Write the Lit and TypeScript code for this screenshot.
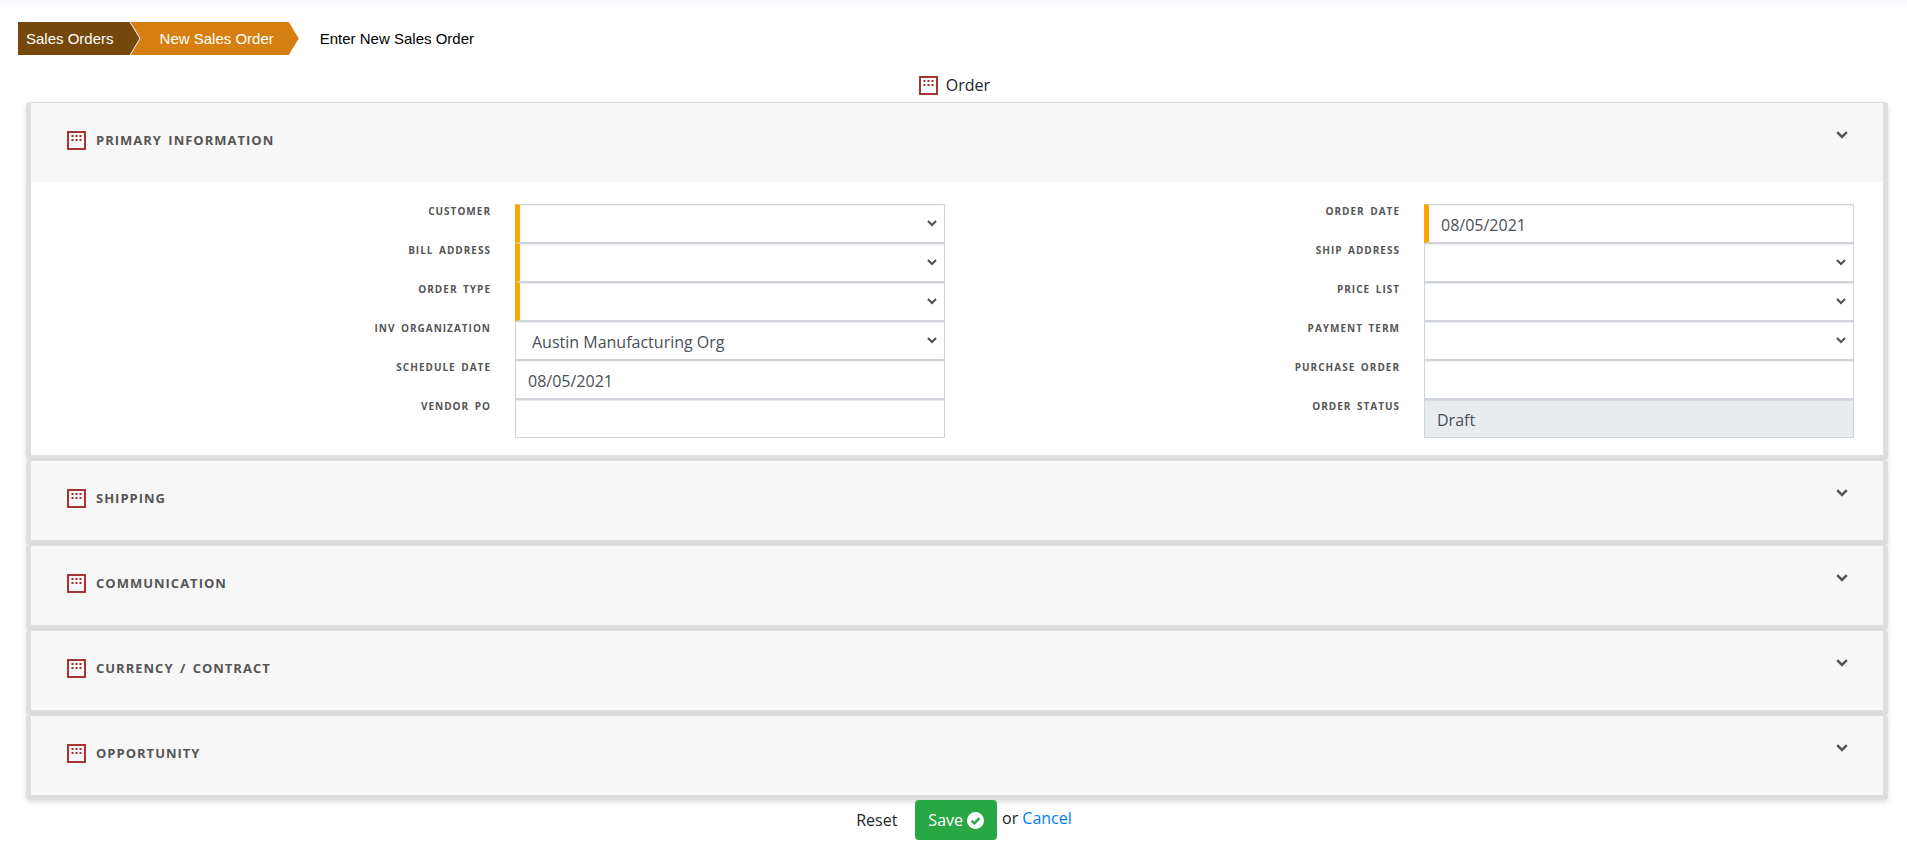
import { LitElement, html, css, svg, nothing, TemplateResult } from "lit";
import { customElement, state } from "lit/decorators.js";
import { classMap } from "lit/directives/class-map.js";

interface Field {
  id: string;
  label: string;
  kind: "select" | "text";
  value?: string;
  required?: boolean;
  readonly?: boolean;
}

const LEFT: Field[] = [
  { id: "customer", label: "Customer", kind: "select", required: true },
  { id: "bill-address", label: "Bill Address", kind: "select", required: true },
  { id: "order-type", label: "Order Type", kind: "select", required: true },
  { id: "inv-org", label: "Inv Organization", kind: "select", value: "Austin Manufacturing Org" },
  { id: "schedule-date", label: "Schedule Date", kind: "text", value: "08/05/2021" },
  { id: "vendor-po", label: "Vendor PO", kind: "text" },
];

const RIGHT: Field[] = [
  { id: "order-date", label: "Order Date", kind: "text", value: "08/05/2021", required: true },
  { id: "ship-address", label: "Ship Address", kind: "select" },
  { id: "price-list", label: "Price List", kind: "select" },
  { id: "payment-term", label: "Payment Term", kind: "select" },
  { id: "purchase-order", label: "Purchase Order", kind: "text" },
  { id: "order-status", label: "Order Status", kind: "text", value: "Draft", readonly: true },
];

const SECTIONS = ["Primary Information", "Shipping", "Communication", "Currency / Contract", "Opportunity"];

const dots = [4, 8, 12].flatMap((x) => [4, 8].map((y) => svg`<rect x=${x + 0.5} y=${y} width="2" height="2" fill="currentColor"></rect>`));

const gridIcon = html`<svg class="grid-icon" width="19" height="19" viewBox="0 0 19 19" aria-hidden="true">
  <rect x="1" y="1" width="17" height="17" fill="none" stroke="currentColor" stroke-width="1.9"></rect>
  ${dots}
</svg>`;

const chevron = html`<svg width="12" height="8" viewBox="0 0 12 8" aria-hidden="true">
  <path d="M1.2 1.2 6 6 10.8 1.2" fill="none" stroke="currentColor" stroke-width="2.5"></path>
</svg>`;

@customElement("app-root")
export class AppRoot extends LitElement {
  @state() private open = new Set<string>(["Primary Information"]);

  static styles = css`
    :host {
      display: block;
      color: #212529;
      background: #fff;
      font: 16px/24px "Open Sans", "Noto Sans", sans-serif;
    }
    * {
      box-sizing: border-box;
    }
    .strip {
      height: 5px;
      background: #f8f9fc;
    }
    .crumbs {
      display: flex;
      margin: 17px 18px 0;
      padding: 0;
      list-style: none;
      font: 15px/33px "Liberation Sans", Arial, sans-serif;
    }
    .crumb {
      display: block;
      color: #fff;
      text-decoration: none;
      clip-path: polygon(0 0, calc(100% - 10px) 0, 100% 50%, calc(100% - 10px) 100%, 0 100%);
    }
    .crumb.first {
      padding: 0 26px 0 8px;
      background: #75470b;
    }
    .crumb.second {
      margin-left: -10px;
      padding: 0 25px 0 30px;
      background: #d57f10;
      clip-path: polygon(1px 0, calc(100% - 10px) 0, 100% 50%, calc(100% - 10px) 100%, 1px 100%, 11px 50%);
    }
    .crumb.current {
      padding-left: 21px;
      color: #000;
      clip-path: none;
    }
    .page-title {
      display: flex;
      align-items: center;
      justify-content: center;
      gap: 8px;
      margin: 18px 0 5px;
      padding-left: 2px;
      font-size: 16px;
      font-weight: 400;
      line-height: 24px;
    }
    .grid-icon {
      flex: none;
      color: #a52a2a;
    }
    .cards {
      margin: 0 19px 0 26px;
    }
    .card {
      border: 5px solid #dedede;
      border-top: 1px solid #dedfe3;
      border-radius: 4px;
      box-shadow: 0 2px 5px rgba(0, 0, 0, 0.14);
    }
    .head {
      display: flex;
      align-items: center;
      gap: 10px;
      width: 100%;
      padding: 23px 35px 28px 36px;
      border: 0;
      background: #f7f7f7;
      color: #555;
      font: 700 13px/28px "Open Sans", "Noto Sans", sans-serif;
      letter-spacing: 1px;
      word-spacing: 2px;
      text-transform: uppercase;
      text-align: left;
      cursor: pointer;
    }
    .heading {
      margin: 0;
    }
    .name {
      flex: 1;
    }
    .mark {
      display: flex;
      padding-bottom: 10px;
    }
    .body {
      display: grid;
      grid-template-columns: 1fr 1fr;
      padding: 22px 29px 17px 5px;
    }
    .row {
      display: grid;
      grid-template-columns: 479fr 430fr;
    }
    .label {
      padding-right: 24px;
      color: #555;
      font-size: 10px;
      font-weight: 700;
      line-height: 15px;
      letter-spacing: 1px;
      word-spacing: 2px;
      text-transform: uppercase;
      text-align: right;
    }
    .control {
      display: block;
      position: relative;
      color: #495057;
    }
    .control svg {
      position: absolute;
      right: 8px;
      top: 16px;
      pointer-events: none;
    }
    .input {
      display: block;
      width: 100%;
      height: 39px;
      margin: 0;
      padding: 4px 12px 2px;
      border: 1px solid #ced4da;
      border-radius: 0;
      background: #fff;
      box-shadow: inset 0 1px 1px rgba(0, 0, 0, 0.075);
      color: #495057;
      font: 16px/24px "Open Sans", "Noto Sans", sans-serif;
      appearance: none;
      outline: none;
    }
    select.input {
      padding-left: 16px;
    }
    .input.required {
      border-left: 5px solid #ffa500;
    }
    .input.readonly {
      background: #e9ecef;
    }
    .actions {
      display: flex;
      justify-content: center;
      align-items: center;
      padding-left: 9px;
    }
    .reset,
    .save {
      border: 0;
      background: none;
      color: inherit;
      font: inherit;
      cursor: pointer;
    }
    .reset {
      padding: 8px 18px 8px 12px;
    }
    .save {
      display: flex;
      align-items: center;
      gap: 4px;
      padding: 8px 13px;
      border-radius: 4px;
      background: #28a745;
      color: #fff;
    }
    .cancel {
      color: #007bff;
      text-decoration: none;
    }
    .or {
      padding: 0 0 4px 5px;
    }
  `;

  private toggle(name: string) {
    const next = new Set(this.open);
    next.has(name) ? next.delete(name) : next.add(name);
    this.open = next;
  }

  private field(f: Field): TemplateResult {
    const cls = classMap({ input: true, required: !!f.required, readonly: !!f.readonly });
    return html`<div class="row">
      <label class="label" for=${f.id}>${f.label}</label>
      <div class="control">
        ${f.kind === "select"
          ? html`<select id=${f.id} class=${cls}>
                <option>${f.value ?? ""}</option>
              </select>
              <svg width="10" height="7" viewBox="0 0 10 7" aria-hidden="true">
                <path d="M1 1 5 5 9 1" fill="none" stroke="currentColor" stroke-width="2"></path>
              </svg>`
          : html`<input id=${f.id} class=${cls} type="text" .value=${f.value ?? ""} ?readonly=${!!f.readonly} />`}
      </div>
    </div>`;
  }

  private section(name: string, i: number): TemplateResult {
    const open = this.open.has(name);
    return html`<section class="card">
      <h2 class="heading">
        <button class="head" type="button" aria-expanded=${open} @click=${() => this.toggle(name)}>
          ${gridIcon}<span class="name">${name}</span><span class="mark">${chevron}</span>
        </button>
      </h2>
      ${i === 0 && open
        ? html`<div class="body">
            <div>${LEFT.map((f) => this.field(f))}</div>
            <div>${RIGHT.map((f) => this.field(f))}</div>
          </div>`
        : nothing}
    </section>`;
  }

  render() {
    return html`
      <div class="strip"></div>
      <nav aria-label="Breadcrumb">
        <ol class="crumbs">
          <li><a class="crumb first" href="#orders">Sales Orders</a></li>
          <li><a class="crumb second" href="#new">New Sales Order</a></li>
          <li><span class="crumb current" aria-current="page">Enter New Sales Order</span></li>
        </ol>
      </nav>
      <form @submit=${(e: Event) => e.preventDefault()}>
        <h1 class="page-title">${gridIcon}<span>Order</span></h1>
        <div class="cards">${SECTIONS.map((s, i) => this.section(s, i))}</div>
        <div class="actions">
          <button class="reset" type="reset">Reset</button>
          <button class="save" type="submit">
            Save
            <svg width="17" height="17" viewBox="0 0 17 17" aria-hidden="true">
              <circle cx="8.5" cy="8.5" r="8.5" fill="#fff"></circle>
              <path d="M4.6 8.8 7.4 11.4 12.4 6.2" fill="none" stroke="#28a745" stroke-width="2.4"></path>
            </svg>
          </button>
          <span class="or">or <a class="cancel" href="#cancel">Cancel</a></span>
        </div>
      </form>
    `;
  }
}
